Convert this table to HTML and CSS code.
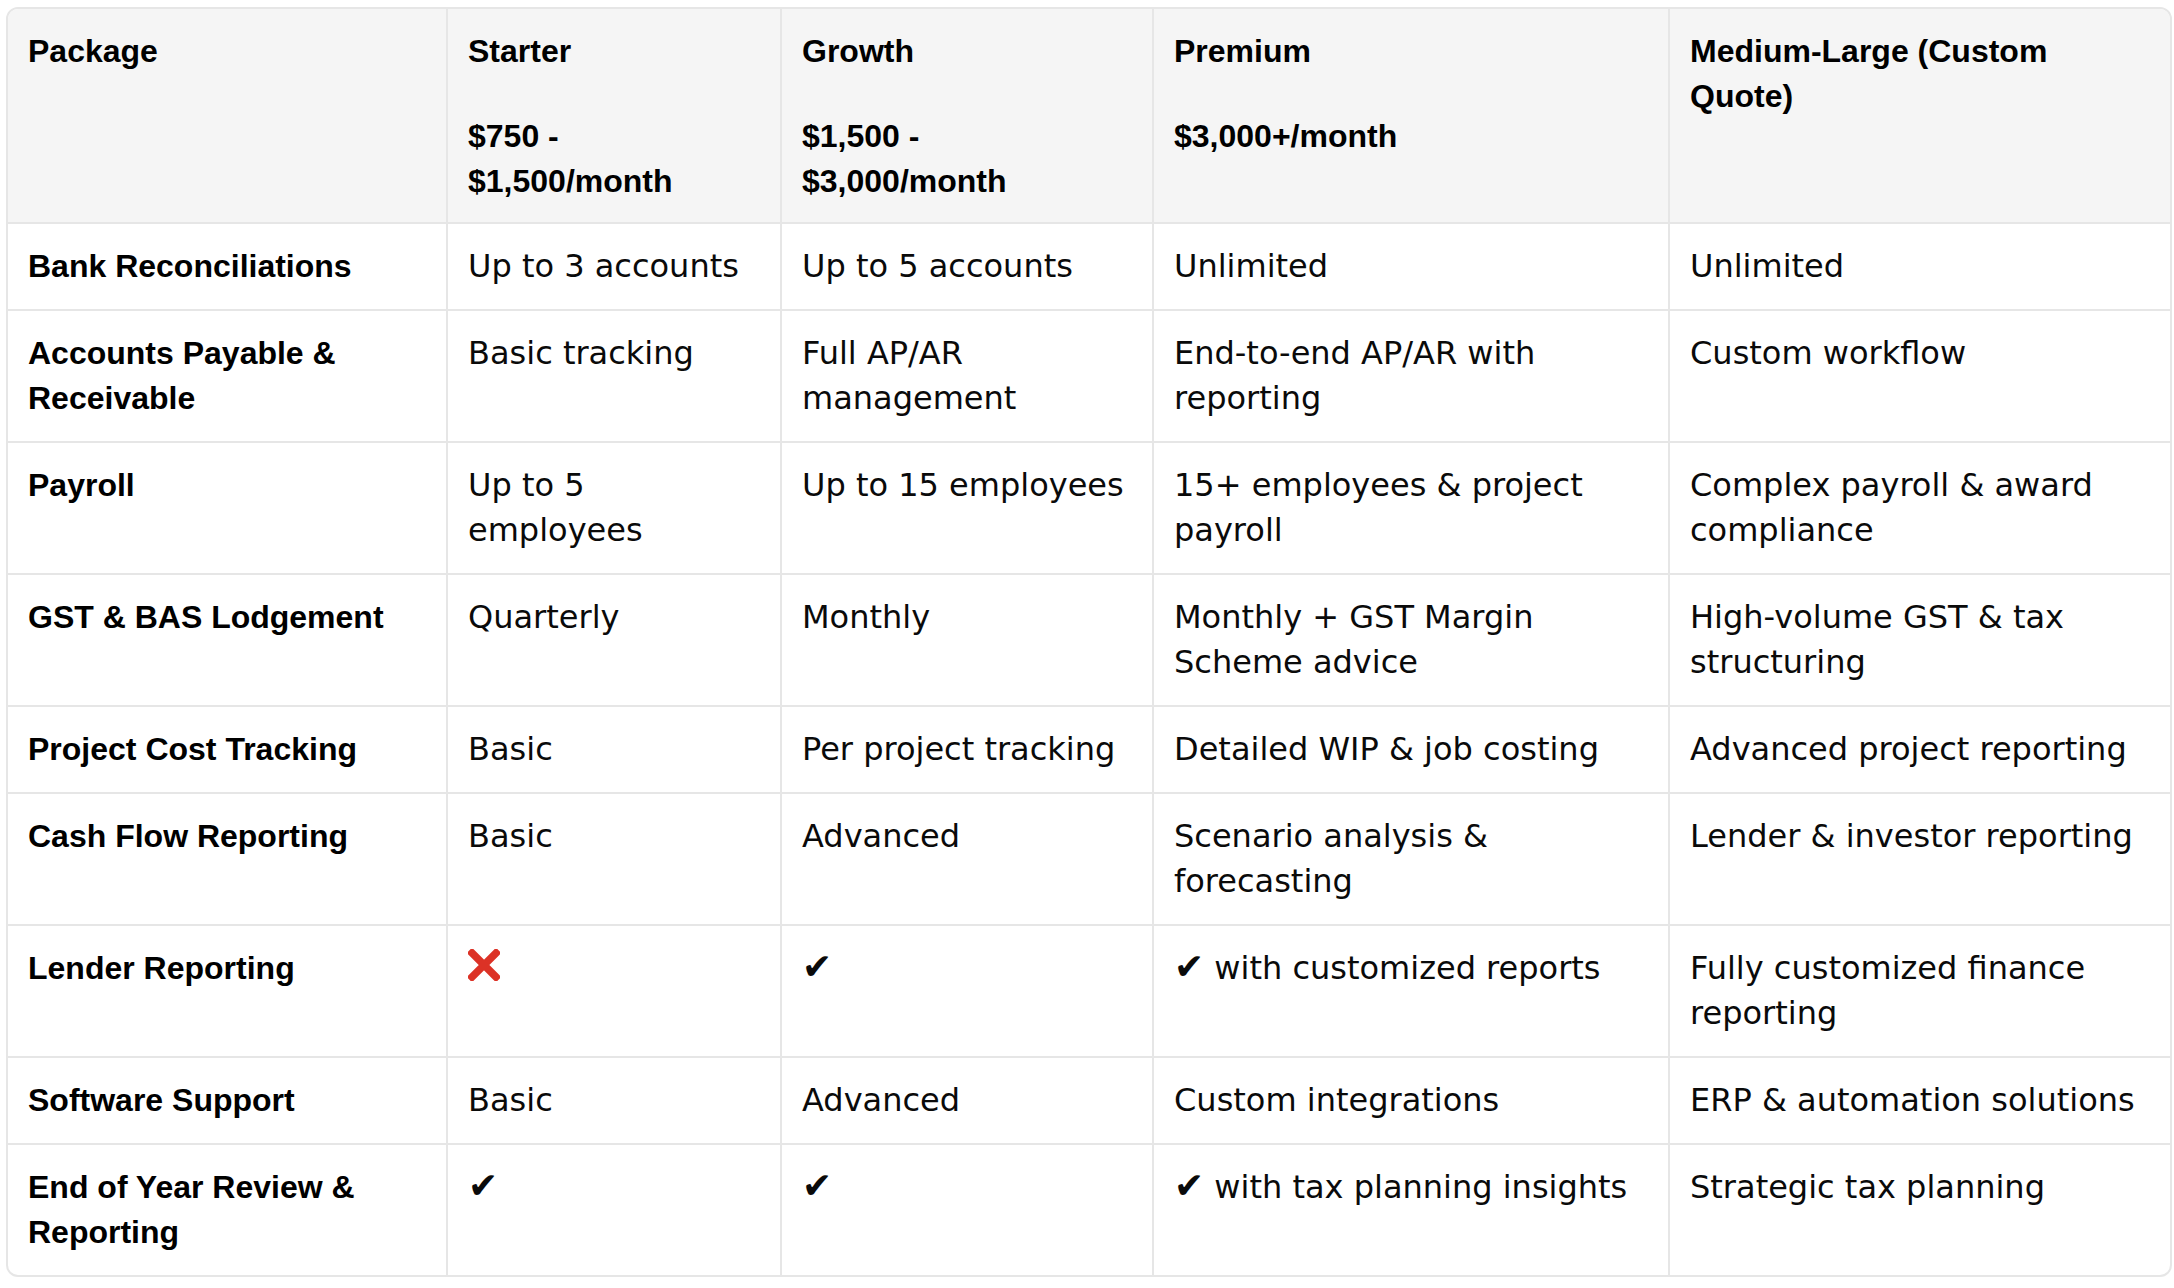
FILE: index.html
```html
<!DOCTYPE html>
<html lang="en">
<head>
<meta charset="utf-8">
<title>Packages</title>
<link rel="stylesheet" href="styles.css">
</head>
<body>
<div class="table-wrap">
  <table class="pricing">
    <colgroup>
      <col class="c1"><col class="c2"><col class="c3"><col class="c4"><col class="c5">
    </colgroup>
    <thead>
      <tr>
        <th>Package</th>
        <th><div class="pkg">Starter</div><div class="price">$750 - $1,500/month</div></th>
        <th><div class="pkg">Growth</div><div class="price">$1,500 - $3,000/month</div></th>
        <th><div class="pkg">Premium</div><div class="price">$3,000+/month</div></th>
        <th><div class="pkg">Medium-Large (Custom Quote)</div></th>
      </tr>
    </thead>
    <tbody>
      <tr>
        <th>Bank Reconciliations</th>
        <td>Up to 3 accounts</td>
        <td>Up to 5 accounts</td>
        <td>Unlimited</td>
        <td>Unlimited</td>
      </tr>
      <tr>
        <th>Accounts Payable &amp; Receivable</th>
        <td>Basic tracking</td>
        <td>Full AP/AR management</td>
        <td>End-to-end AP/AR with reporting</td>
        <td>Custom workflow</td>
      </tr>
      <tr>
        <th>Payroll</th>
        <td>Up to 5 employees</td>
        <td>Up to 15 employees</td>
        <td>15+ employees &amp; project payroll</td>
        <td>Complex payroll &amp; award compliance</td>
      </tr>
      <tr>
        <th>GST &amp; BAS Lodgement</th>
        <td>Quarterly</td>
        <td>Monthly</td>
        <td>Monthly + GST Margin Scheme advice</td>
        <td>High-volume GST &amp; tax structuring</td>
      </tr>
      <tr>
        <th>Project Cost Tracking</th>
        <td>Basic</td>
        <td>Per project tracking</td>
        <td>Detailed WIP &amp; job costing</td>
        <td>Advanced project reporting</td>
      </tr>
      <tr>
        <th>Cash Flow Reporting</th>
        <td>Basic</td>
        <td>Advanced</td>
        <td>Scenario analysis &amp; forecasting</td>
        <td>Lender &amp; investor reporting</td>
      </tr>
      <tr>
        <th>Lender Reporting</th>
        <td><svg class="cross" viewBox="0 0 32 32" aria-label="No"><path d="M4 4 L28 28 M28 4 L4 28" /></svg></td>
        <td><span class="tick">✔</span></td>
        <td><span class="tick">✔</span> with customized reports</td>
        <td>Fully customized finance reporting</td>
      </tr>
      <tr>
        <th>Software Support</th>
        <td>Basic</td>
        <td>Advanced</td>
        <td>Custom integrations</td>
        <td>ERP &amp; automation solutions</td>
      </tr>
      <tr>
        <th>End of Year Review &amp; Reporting</th>
        <td><span class="tick">✔</span></td>
        <td><span class="tick">✔</span></td>
        <td><span class="tick">✔</span> with tax planning insights</td>
        <td>Strategic tax planning</td>
      </tr>
    </tbody>
  </table>
</div>
</body>
</html>
```

FILE: styles.css
```css
html, body {
  margin: 0;
  padding: 0;
  background: #ffffff;
}

body {
  color: #000000;
  font-family: "DejaVu Sans", sans-serif;
}

.table-wrap {
  margin: 7px 2px 0 6px;
  border: 2px solid #e6e6e6;
  border-radius: 12px;
  overflow: hidden;
}

.pricing {
  width: 100%;
  table-layout: fixed;
  border-collapse: separate;
  border-spacing: 0;
}

.c1 { width: 440px; }
.c2 { width: 334px; }
.c3 { width: 372px; }
.c4 { width: 516px; }
.c5 { width: 500px; }

.pricing th,
.pricing td {
  box-sizing: border-box;
  padding: 20px;
  vertical-align: top;
  text-align: left;
  font-size: 32px;
  line-height: 45px;
  border-right: 2px solid #e6e6e6;
  border-bottom: 2px solid #e6e6e6;
}

.pricing tr > :last-child {
  border-right: none;
}

.pricing tbody tr:last-child > * {
  border-bottom: none;
}

.pricing th {
  font-family: "Liberation Sans", Arial, sans-serif;
  font-weight: 700;
}

.pricing td {
  font-family: "DejaVu Sans", sans-serif;
  font-weight: 400;
  color: #0a0a0a;
}

.pricing thead th {
  background: #f5f5f5;
  padding-bottom: 18px;
}

.price {
  margin-top: 40px;
}

.tick {
  font-family: "DejaVu Sans", sans-serif;
  font-size: 36px;
  line-height: 1;
}

.cross {
  display: block;
  width: 32px;
  height: 32px;
  margin-top: 3px;
}

.cross path {
  fill: none;
  stroke: #dc3226;
  stroke-width: 7.5;
  stroke-linecap: square;
}
```
